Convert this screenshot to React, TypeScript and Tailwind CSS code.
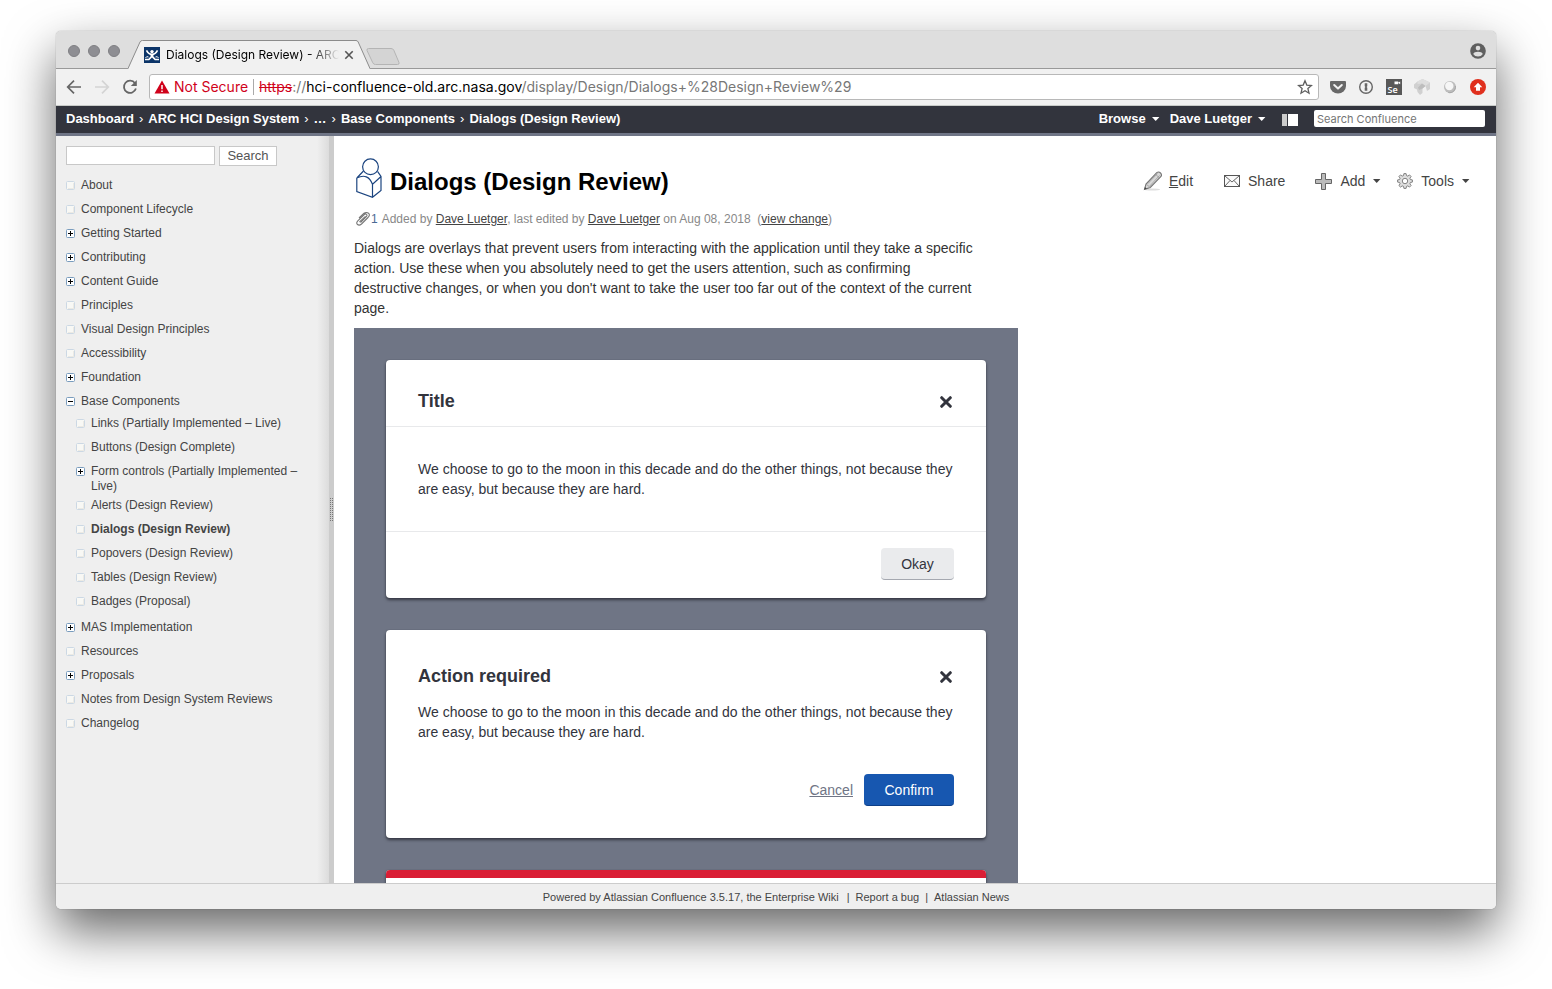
import type { ReactNode } from "react";

type TreeItem = { label: string; state?: "open" | "closed"; current?: boolean; children?: TreeItem[] };

const pages: TreeItem[] = [
  { label: "About" },
  { label: "Component Lifecycle" },
  { label: "Getting Started", state: "closed" },
  { label: "Contributing", state: "closed" },
  { label: "Content Guide", state: "closed" },
  { label: "Principles" },
  { label: "Visual Design Principles" },
  { label: "Accessibility" },
  { label: "Foundation", state: "closed" },
  {
    label: "Base Components",
    state: "open",
    children: [
      { label: "Links (Partially Implemented – Live)" },
      { label: "Buttons (Design Complete)" },
      { label: "Form controls (Partially Implemented – Live)", state: "closed" },
      { label: "Alerts (Design Review)" },
      { label: "Dialogs (Design Review)", current: true },
      { label: "Popovers (Design Review)" },
      { label: "Tables (Design Review)" },
      { label: "Badges (Proposal)" },
    ],
  },
  { label: "MAS Implementation", state: "closed" },
  { label: "Resources" },
  { label: "Proposals", state: "closed" },
  { label: "Notes from Design System Reviews" },
  { label: "Changelog" },
];

function TreeMark({ state }: { state?: "open" | "closed" }) {
  return (
    <svg viewBox="0 0 9 9" className="mt-[3px] h-[9px] w-[9px] shrink-0" aria-hidden="true">
      <rect x="0.5" y="0.5" width="8" height="8" rx="1" fill={state ? "#fff" : "#f8f8f5"} stroke={state ? "#7a9cbd" : "#ccd8e4"} />
      {!state && <path d="M2 7.5h6M7.5 2v6" stroke="#eceae4" />}
      {state && <path d="M2 4.5h5" stroke="#000" />}
      {state === "closed" && <path d="M4.5 2v5" stroke="#000" />}
    </svg>
  );
}

function Tree({ items, nested }: { items: TreeItem[]; nested?: boolean }) {
  return (
    <ul className={nested ? "-mt-0.5 mb-0.5 pl-2.5" : ""}>
      {items.map((item) => (
        <li key={item.label}>
          <div className="flex min-h-6 items-start gap-1.5 py-0.5">
            <TreeMark state={item.state} />
            <a href="#page" className={item.current ? "font-bold" : ""}>
              {item.label}
            </a>
          </div>
          {item.children && <Tree items={item.children} nested />}
        </li>
      ))}
    </ul>
  );
}

function Caret({ className }: { className: string }) {
  return (
    <svg viewBox="0 0 8 4" className={`h-1 w-2 ${className}`} aria-hidden="true">
      <path d="M0 0h7.4L3.7 4z" fill="currentColor" />
    </svg>
  );
}

function TabStrip() {
  return (
    <div className="flex h-[38px] shrink-0 items-end bg-[#dedede] pl-3 shadow-[inset_0_-1px_0_#999]">
      <div className="flex gap-2 self-center pt-0.5">
        <span className="h-3 w-3 rounded-full border border-[#7f7f83] bg-[#8e8e93]" />
        <span className="h-3 w-3 rounded-full border border-[#7f7f83] bg-[#8e8e93]" />
        <span className="h-3 w-3 rounded-full border border-[#7f7f83] bg-[#8e8e93]" />
      </div>
      <div className="relative ml-2 flex h-[29px] w-[242px] items-center pl-4">
        <svg viewBox="0 0 242 29" className="absolute inset-0 h-full w-full" aria-hidden="true">
          <path d="M0 29L12 2Q12.600 .5 14.500 .5H228Q229.500 .5 230.200 2L242 29z" fill="#f1f1f1" />
          <path d="M0 28.500L12 2Q12.600 .5 14.500 .5H228Q229.500 .5 230.200 2L242 28.500" fill="none" stroke="#8c8c8c" />
        </svg>
        <svg viewBox="0 0 16 16" className="relative h-4 w-4 shrink-0" aria-hidden="true">
          <rect width="16" height="16" fill="#0b3468" />
          <circle cx="8" cy="4.600" r="1.700" fill="#fff" />
          <path d="M2.500 3.300Q4.500 7.300 8 7.300Q11.500 7.300 13.500 3.300" fill="none" stroke="#fff" strokeWidth="1.600" />
          <path d="M6.300 7h3.400l-.4 2.300 2.200 2.500h3.500v1.400h-4.200L8 10.400l-2.800 2.800H1v-1.400h3.500l2.200-2.500z" fill="#fff" />
          <path d="M1.500 11Q2.500 8.800 4.500 10M14.500 11Q13.500 8.800 11.500 10" fill="none" stroke="#fff" strokeWidth="1" />
        </svg>
        <span className="relative ml-1.5 w-[173px] bg-gradient-to-r from-black from-80% to-[#f1f1f1] bg-clip-text font-[Inter,sans-serif] text-[12px] leading-4 whitespace-nowrap text-transparent">
          Dialogs (Design Review) - ARC
        </span>
        <button aria-label="Close tab" className="relative ml-[5px]">
          <svg viewBox="0 0 10 10" className="h-2.5 w-2.5">
            <path d="M1.300 1.300l7.400 7.400M8.700 1.300l-7.400 7.400" stroke="#555" strokeWidth="1.600" />
          </svg>
        </button>
      </div>
      <button aria-label="New tab" className="mb-1 -ml-1">
        <svg viewBox="0 0 34 17" className="h-[17px] w-[34px]">
          <path d="M2.500 .5H25Q27 .5 27.800 2.200L33 14.500Q33.600 16.500 31.500 16.500H9.500Q7.500 16.500 6.800 14.800L1 2.500Q.5 .5 2.500 .5z" fill="#d4d4d4" stroke="#b4b4b4" />
        </svg>
      </button>
      <button aria-label="Profile" className="mr-2.5 mb-2.5 ml-auto">
        <svg viewBox="0 0 16 16" className="h-4 w-4">
          <circle cx="8" cy="8" r="7.800" fill="#5f5f5f" />
          <circle cx="8" cy="5.100" r="2.300" fill="#dedede" />
          <path d="M3.200 10.900Q4.200 8.700 8 8.700T12.800 10.900Q11.200 13.400 8 13.400T3.200 10.900z" fill="#dedede" />
        </svg>
      </button>
    </div>
  );
}

function Extensions() {
  return (
    <div className="flex items-center gap-3">
      <svg viewBox="0 0 16 16" className="h-4 w-4" aria-hidden="true">
        <path d="M1 2h14Q16 2 16 3V7A8 7.500 0 0 1 0 7V3Q0 2 1 2z" fill="#686868" />
        <path d="M4.200 6L8 9.600 11.800 6" fill="none" stroke="#f1f1f1" strokeWidth="2" strokeLinecap="round" strokeLinejoin="round" />
      </svg>
      <svg viewBox="0 0 16 16" className="h-4 w-4" aria-hidden="true">
        <circle cx="8" cy="8" r="6.300" fill="#f1f1f1" stroke="#666" strokeWidth="1.400" />
        <path d="M6.700 4.200h2.600v3.100l-.7.700.7.700v3.100H6.700V8.700l.7-.7-.7-.7z" fill="#666" />
      </svg>
      <svg viewBox="0 0 16 16" className="h-4 w-4" aria-hidden="true">
        <rect width="16" height="16" fill="#585858" />
        <path d="M8.500 2.500h3.700v2.700H8.500zM12 3.700l2.200-1.200v2.700z" fill="#fff" />
        <text x="1.500" y="14" fontSize="9" fontWeight="600" fontFamily="Open Sans, sans-serif" fill="#fff">Se</text>
      </svg>
      <svg viewBox="0 0 16 16" className="h-4 w-4" aria-hidden="true">
        <path d="M3.500 2.500L8.500 0 16 3.500V10l-3 2-1.500-5-3 2.500V14l-2.500 2-2.500-3-.5-2.500L0 9V5.500z" fill="#d0d0d0" />
        <path d="M3.500 2.500L8.500 0 16 3.500 11.500 7 8 4.500 3.500 5z" fill="#dedede" />
        <path d="M4 8.500L8 4.500 11.500 7l-3 2.500L5 11z" fill="#bdbdbd" />
      </svg>
      <svg viewBox="0 0 16 16" className="h-4 w-4" aria-hidden="true">
        <circle cx="8" cy="8" r="6" fill="#bdbdbd" />
        <circle cx="7.300" cy="7" r="4.200" fill="#f6f6f6" />
        <path d="M13.300 7a5.600 5.600 0 0 1-7 6.500" fill="none" stroke="#a4a4a4" />
      </svg>
      <svg viewBox="0 0 16 16" className="h-4 w-4" aria-hidden="true">
        <circle cx="8" cy="8" r="8" fill="#e0301e" />
        <path d="M8 3.800l4.300 4.400H10v3.600H6V8.200H3.700z" fill="#fff" />
      </svg>
    </div>
  );
}

function Toolbar() {
  return (
    <div className="flex h-[37px] shrink-0 items-center border-b border-[#c8cbc8] bg-[#f1f1f1] pr-2.5 pl-2.5">
      <button aria-label="Back">
        <svg viewBox="0 0 16 16" className="h-4 w-4">
          <path d="M15 8H2M8 1.700L1.700 8 8 14.300" fill="none" stroke="#666" strokeWidth="1.700" />
        </svg>
      </button>
      <button aria-label="Forward" className="ml-3">
        <svg viewBox="0 0 16 16" className="h-4 w-4">
          <path d="M1 8h13M8 1.700L14.300 8 8 14.300" fill="none" stroke="#d4d4d4" strokeWidth="1.700" />
        </svg>
      </button>
      <button aria-label="Reload" className="ml-3">
        <svg viewBox="0 0 16 16" className="h-4 w-4">
          <path d="M13 4.200A6.100 6.100 0 1 0 13.900 9.600" fill="none" stroke="#666" strokeWidth="1.800" />
          <path d="M14.800 1v6H8.800z" fill="#666" />
        </svg>
      </button>
      <div className="ml-[11px] flex h-[26px] min-w-0 flex-1 items-center rounded-[3px] border border-[#b8b8b8] bg-white pr-[5px] pl-1 font-[Inter,sans-serif] text-[14px] leading-4 whitespace-nowrap">
        <svg viewBox="0 0 16 14" className="h-3.5 w-4 shrink-0" aria-hidden="true">
          <path d="M8 .5L15.500 13.500H.5z" fill="#d0021b" />
          <path d="M8 5v4.200M8 10.400v1.700" stroke="#fff" strokeWidth="1.500" />
        </svg>
        <span className="ml-1 text-[#d0021b]">Not Secure</span>
        <span className="mx-[5px] h-4 w-px bg-[#aaa]" />
        <span className="text-[#777]">
          <span className="text-[#d0021b] line-through">https</span>://
          <span className="text-black">hci-confluence-old.arc.nasa.gov</span>/display/Design/Dialogs+%28Design+Review%29
        </span>
        <button aria-label="Bookmark" className="ml-auto">
          <svg viewBox="0 0 16 16" className="h-4 w-4">
            <path d="M8 1.800l1.800 4.300 4.700.4-3.600 3.100 1.100 4.600L8 11.700l-4 2.500 1.100-4.600L1.500 6.500l4.700-.4z" fill="none" stroke="#5f5f5f" strokeWidth="1.300" />
          </svg>
        </button>
      </div>
      <div className="ml-[11px]">
        <Extensions />
      </div>
    </div>
  );
}

function SiteHeader() {
  const crumbs = ["Dashboard", "ARC HCI Design System", "…", "Base Components", "Dialogs (Design Review)"];
  return (
    <header className="flex h-[30px] shrink-0 items-center border-b-3 border-[#6f7586] bg-[#32343d] pr-[11px] pb-0.5 pl-2.5 text-[13px] font-bold text-white">
      <nav className="flex items-center">
        {crumbs.map((crumb, i) => (
          <span key={crumb} className="flex items-center">
            {i > 0 && <span className="mx-[5px] font-normal">›</span>}
            <a href="#crumb">{crumb}</a>
          </span>
        ))}
      </nav>
      <button className="ml-auto flex items-center gap-1.5">
        Browse <Caret className="text-white" />
      </button>
      <button className="ml-2.5 flex items-center gap-1.5">
        Dave Luetger <Caret className="text-white" />
      </button>
      <button aria-label="Toggle sidebar" className="mt-0.5 ml-4">
        <svg viewBox="0 0 16 12" className="h-3 w-4" shapeRendering="crispEdges">
          <path d="M0 0h5v12H0z" fill="#ccc" />
          <path d="M6 0h10v12H6z" fill="#fff" />
        </svg>
      </button>
      <input
        aria-label="Search Confluence"
        placeholder="Search Confluence"
        className="ml-4 h-[17px] w-[171px] rounded-xs bg-white px-[3px] font-[Inter,sans-serif] text-[11px] font-normal text-black placeholder:text-[#757575]"
      />
    </header>
  );
}

function Sidebar() {
  return (
    <aside className="w-[273px] shrink-0 bg-[linear-gradient(to_left,#dcdcdc,#efefef_12px)] pt-2.5 pl-2.5 text-[12px] leading-[15px] text-[#444]">
      <form className="mb-2.5 flex items-start gap-1" onSubmit={(e) => e.preventDefault()}>
        <input aria-label="Search pages" className="h-[19px] w-[149px] border border-[#c8c8c8] bg-white px-1" />
        <button className="h-5 w-[58px] border border-[#c8c8c8] bg-white text-[13px] leading-4 text-[#555]">Search</button>
      </form>
      <div className="w-[240px]">
        <Tree items={pages} />
      </div>
    </aside>
  );
}

function Splitter() {
  return (
    <div className="flex w-[5px] shrink-0 items-center bg-[#ccc]">
      <svg viewBox="0 0 5 24" className="h-6 w-[5px]" shapeRendering="crispEdges" aria-hidden="true">
        <path d="M1.500 0v24M3.500 0v24" stroke="#777" strokeDasharray="1 1" />
      </svg>
    </div>
  );
}

function PageActions() {
  return (
    <div className="mt-[13px] flex items-center pr-0.5 text-[14px] leading-5 text-[#444]">
      <a href="#edit" className="flex items-center gap-1.5">
        <svg viewBox="0 0 20 20" className="h-5 w-5" aria-hidden="true">
          <ellipse cx="9" cy="18.500" rx="8" ry="1" fill="#ddd" />
          <path d="M1.500 18.300L3 13 13.700 1.600Q15.800.3 17.500 2T18 5.500L7.300 16.500z" fill="#d8d8d8" stroke="#777" strokeWidth="1.100" />
          <path d="M3 13l4.300 3.500M5 12.500l9.500-10M6.800 15l9.700-10.500M12.300 3l4.200 4" stroke="#999" strokeWidth=".8" />
          <path d="M1.200 18.600l.8-2.600 1.800 1.700z" fill="#444" />
        </svg>
        <span><span className="underline">E</span>dit</span>
      </a>
      <a href="#share" className="ml-[31px] flex items-center gap-2">
        <svg viewBox="0 0 16 12" className="h-3 w-4" aria-hidden="true">
          <rect x=".5" y=".5" width="15" height="11" fill="#fafafa" stroke="#555" />
          <path d="M1 1l7 6 7-6M1 11l5-5.500M15 11l-5-5.500" fill="none" stroke="#555" strokeWidth=".9" />
        </svg>
        Share
      </a>
      <button className="ml-[30px] flex items-center">
        <svg viewBox="0 0 17 17" className="mr-2 h-[17px] w-[17px]" aria-hidden="true">
          <path d="M6.500.5h4v6h6v4h-6v6h-4v-6h-6v-4h6z" fill="#bbb" stroke="#666" />
        </svg>
        Add <Caret className="ml-2" />
      </button>
      <button className="ml-4 flex items-center">
        <svg viewBox="0 0 16 16" className="mr-2 h-4 w-4" aria-hidden="true">
          <path
            d="M6.900.6h2.200l.4 2 1.300.5 1.700-1.200 1.600 1.600-1.200 1.700.5 1.300 2 .4v2.200l-2 .4-.5 1.300 1.200 1.700-1.600 1.600-1.700-1.200-1.300.5-.4 2H6.900l-.4-2-1.300-.5-1.700 1.200-1.600-1.600 1.200-1.700-.5-1.300-2-.4V6.900l2-.4.5-1.300-1.200-1.700 1.600-1.600 1.700 1.200 1.300-.5z"
            fill="#ddd"
            stroke="#777"
            strokeWidth=".9"
          />
          <circle cx="8" cy="8" r="2.700" fill="#fff" stroke="#777" strokeWidth=".9" />
        </svg>
        Tools <Caret className="ml-2" />
      </button>
    </div>
  );
}

function CloseButton() {
  return (
    <button aria-label="Close dialog" className="mt-px mr-0.5">
      <svg viewBox="0 0 12 12" className="h-3 w-3">
        <path d="M1.700 1.700l8.600 8.600M10.300 1.700l-8.600 8.600" stroke="#32343d" strokeWidth="3" strokeLinecap="round" />
      </svg>
    </button>
  );
}

function DialogCard({ children }: { children: ReactNode }) {
  return (
    <section className="overflow-hidden rounded-[4px] bg-white shadow-[0_0_1px_rgba(50,52,61,0.5),0_2px_3px_rgba(30,32,40,0.7)]">
      {children}
    </section>
  );
}

const quote =
  "We choose to go to the moon in this decade and do the other things, not because they are easy, but because they are hard.";

function DialogSamples() {
  return (
    <div className="mt-2.5 flex w-[664px] flex-col gap-8 bg-[#6f7585] p-8 text-[14px] leading-5 text-[#32343d]">
      <DialogCard>
        <div className="flex h-[67px] items-center justify-between border-b border-[#e8e9eb] px-8 pt-4">
          <h2 className="text-[18px] font-bold">Title</h2>
          <CloseButton />
        </div>
        <p className="px-8 py-8">{quote}</p>
        <div className="flex justify-end border-t border-[#e8e9eb] px-8 pt-4 pb-[18px]">
          <button className="h-8 w-[73px] rounded-[4px] border-b border-[#a5a8b0] bg-[#eaebed]">Okay</button>
        </div>
      </DialogCard>
      <DialogCard>
        <div className="px-8 pt-9 pb-8">
          <div className="flex items-center justify-between">
            <h2 className="text-[18px] font-bold">Action required</h2>
            <CloseButton />
          </div>
          <p className="mt-4">{quote}</p>
          <div className="mt-8 flex items-center justify-end gap-[11px]">
            <a href="#cancel" className="text-[#6f7585] underline">Cancel</a>
            <button className="h-8 w-[90px] rounded-[4px] border-b border-[#0d3f88] bg-[#1757b0] text-white">Confirm</button>
          </div>
        </div>
      </DialogCard>
      <DialogCard>
        <div className="h-52 border-t-8 border-[#da1e35]" />
      </DialogCard>
    </div>
  );
}

function PageLogo() {
  return (
    <svg viewBox="0 0 26 40" className="h-10 w-[26px] shrink-0" fill="none" stroke="#1c4580" strokeWidth="1.200" aria-hidden="true">
      <circle cx="14.500" cy="8.800" r="7.900" />
      <path d="M.8 20V33.500L16.500 39.200 25 32.500V18.500L21.500 13.300M.8 20L7.500 13M16.500 39V26.300L25 18.500M.8 20Q12 14.500 16.500 26.300" />
    </svg>
  );
}

function Page() {
  return (
    <main className="min-w-0 flex-1 bg-white pr-6 pl-5 text-[14px] leading-5 text-[#333]">
      <div className="flex items-start justify-between pt-[22px]">
        <div className="flex items-center gap-2 pl-0.5">
          <PageLogo />
          <h1 className="pt-2 text-[24px] leading-8 font-bold text-black">Dialogs (Design Review)</h1>
        </div>
        <PageActions />
      </div>
      <div className="mt-[11px] flex items-center text-[12px] text-[#888]">
        <svg viewBox="0 0 14 14" className="mr-px ml-0.5 h-3.5 w-3.5" fill="none" stroke="#777" strokeWidth="1.100" aria-hidden="true">
          <path d="M4.500 10.500L10.500 4.500Q11.500 3.200 10.500 2.300T8.300 2.600L1.800 8.800Q-.2 11 1.500 12.500T5.500 12L12 5.500Q14.500 2.800 12.500 1.300T8 1.300L3 6" />
          <path d="M3.500 10L9.500 4.300" />
        </svg>
        <span className="mr-1 text-[#4a6a94]">1</span>
        <span>
          Added by <a href="#user" className="text-[#444] underline">Dave Luetger</a>, last edited by{" "}
          <a href="#user" className="text-[#444] underline">Dave Luetger</a> on Aug 08, 2018 &nbsp;(
          <a href="#change" className="text-[#444] underline">view change</a>)
        </span>
      </div>
      <p className="mt-[9px] max-w-[624px]">
        Dialogs are overlays that prevent users from interacting with the application until they take a specific action. Use these when
        you absolutely need to get the users attention, such as confirming destructive changes, or when you don't want to take the user
        too far out of the context of the current page.
      </p>
      <DialogSamples />
    </main>
  );
}

export default function App() {
  return (
    <div className="flex h-screen overflow-hidden bg-white px-14 pt-[31px] pb-20 font-['Liberation_Sans',Arial,sans-serif]">
      <div className="flex min-w-0 flex-1 flex-col overflow-hidden rounded-[5px] shadow-[0_0_1px_rgba(0,0,0,0.5),0_22px_50px_rgba(0,0,0,0.6)]">
        <TabStrip />
        <Toolbar />
        <SiteHeader />
        <div className="flex min-h-0 flex-1 overflow-hidden">
          <Sidebar />
          <Splitter />
          <Page />
        </div>
        <footer className="flex h-[26px] shrink-0 items-center justify-center border-t border-[#ccc] bg-[#efefef] pt-px text-[11px] text-[#444]">
          <a href="#confluence">Powered by Atlassian Confluence 3.5.17, the Enterprise Wiki</a>
          <span className="mr-1.5 ml-2">|</span>
          <a href="#bug">Report a bug</a>
          <span className="mx-1.5">|</span>
          <a href="#news">Atlassian News</a>
        </footer>
      </div>
    </div>
  );
}
